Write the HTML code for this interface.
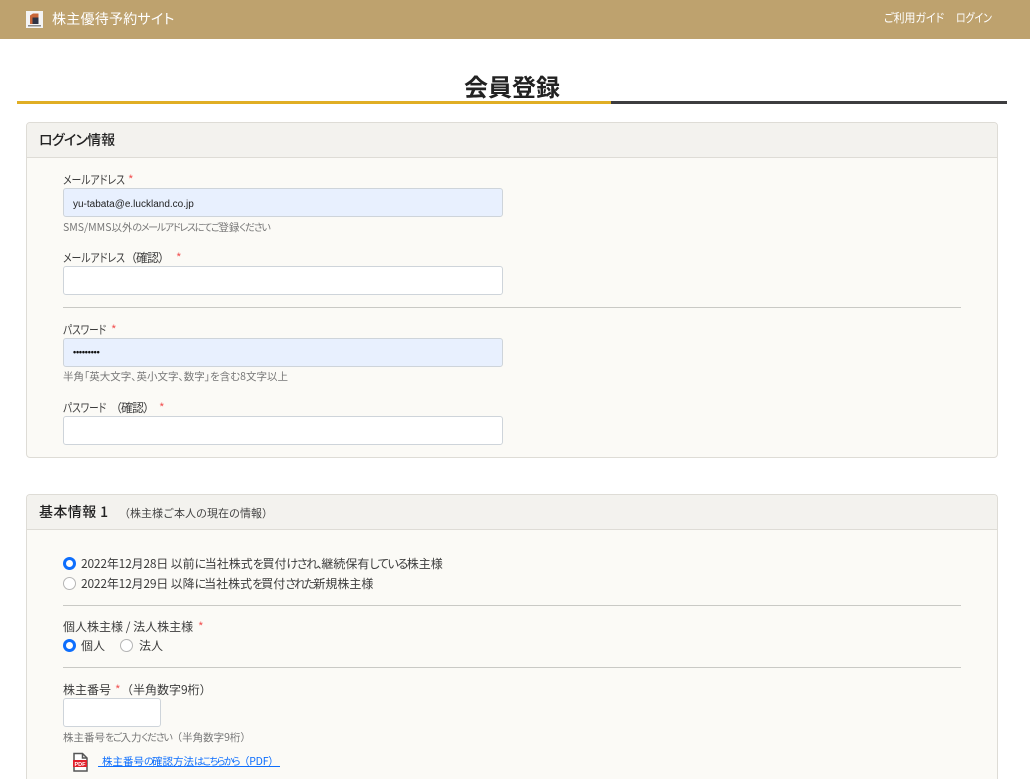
<!DOCTYPE html>
<html lang="ja"><head><meta charset="utf-8"><title>会員登録</title>
<style>
html,body{margin:0;padding:0;background:#fff;width:1030px;height:779px;overflow:hidden}
#w{position:relative;width:1030px;height:779px;overflow:hidden;font-family:"Liberation Sans","Noto Sans CJK JP",sans-serif;color:#212529}
.a{position:absolute;white-space:nowrap}
.t{position:absolute;white-space:nowrap;font-size:12px;line-height:16px;color:#3c3c3c;font-family:"Noto Sans CJK JP",sans-serif}
.x{font-feature-settings:"palt";transform-origin:0 50%}
.k{font-feature-settings:"palt";letter-spacing:-1.4px}
.n{font-feature-settings:"palt";letter-spacing:-2px}
.h{color:#777;font-size:10.5px}
.h .k{font-size:10px;letter-spacing:-1.3px}
.s{color:#f25a5a}
.i{position:absolute;left:63px;width:438px;height:27px;border:1px solid #ced4da;border-radius:3px;background:#fff}
.f{background:#e8f0fe}
.c{position:absolute;left:26px;width:970px;border:1px solid #dedcd6;border-radius:4px;background:#fbfaf6}
.ch{position:absolute;left:0;top:0;right:0;height:34px;background:#f3f2ee;border-bottom:1px solid #dedcd6;border-radius:4px 4px 0 0}
.l{position:absolute;left:63px;width:898px;height:1px;background:#c9c9c5}
.r{position:absolute;width:13px;height:13px;border-radius:50%;box-sizing:border-box}
.on{background:#fff;border:3.5px solid #0d6efd}
.off{background:#fff;border:1px solid #b5b5b5}
</style></head><body><div id="w">
<div class="a" style="left:0;top:0;width:1030px;height:39px;background:#bea26e"></div>
<svg class="a" style="left:26px;top:11px" width="17" height="17" viewBox="0 0 17 17"><rect width="17" height="17" fill="#f4f4f4"/><path d="M4 13V4.500L7 2.500h5.500V13z" fill="#c9673a"/><path d="M6.500 13V6.500h6V13z" fill="#2f3345"/><rect x="2" y="14" width="13" height="1.500" fill="#8a8a8a"/></svg>
<div class="t" style="left:52px;top:9px;font-size:14px;line-height:20px;color:#fff;letter-spacing:.25px;font-feature-settings:'palt'">株主優待予約サイト</div>
<div class="t x" style="left:884px;top:10px;color:#fff;transform:scaleX(.91)">ご利用ガイド</div>
<div class="t x" style="left:956px;top:10px;color:#fff;transform:scaleX(.82)">ログイン</div>

<div class="t" style="left:464px;top:69px;font-size:24px;line-height:34px;font-weight:700;color:#222">会員登録</div>
<div class="a" style="left:17px;top:101px;width:594px;height:3px;background:#e0ae24"></div>
<div class="a" style="left:611px;top:101px;width:396px;height:3px;background:#3d3d3f"></div>

<div class="c" style="top:122px;height:334px"><div class="ch"></div></div>
<div class="t" style="left:39px;top:130px;font-size:14px;line-height:20px;font-weight:500;color:#222"><span style="font-feature-settings:'palt';letter-spacing:-.75px">ログイン</span>情報</div>

<div class="t x" style="left:63px;top:172px;transform:scaleX(.82)">メールアドレス</div>
<div class="t s" style="left:128px;top:172px">*</div>
<div class="i f" style="top:188px"></div>
<div class="a" style="left:73px;top:198px;font-size:10px;line-height:14px;color:#222">yu-tabata@e.luckland.co.jp</div>
<div class="t h" style="left:63px;top:219px">SMS/MMS以外<span class="k">のメールアドレスにてご</span>登録<span class="k">ください</span></div>

<div class="t x" style="left:63px;top:250px;transform:scaleX(.82)">メールアドレス</div>
<div class="t" style="left:125px;top:250px;letter-spacing:-1px">（確認）</div>
<div class="t s" style="left:176px;top:250px">*</div>
<div class="i" style="top:266px"></div>
<div class="l" style="top:307px"></div>

<div class="t x" style="left:63px;top:322px;transform:scaleX(.8)">パスワード</div>
<div class="t s" style="left:111px;top:322px">*</div>
<div class="i f" style="top:338px"></div>
<div class="a" style="left:73px;top:345px;font-size:9px;line-height:14px;letter-spacing:-.2px;color:#111;font-weight:700">•••••••••</div>
<div class="t h" style="left:63px;top:369px;font-feature-settings:'palt'">半角「英大文字、英小文字、数字」を含む8文字以上</div>

<div class="t x" style="left:63px;top:400px;transform:scaleX(.8)">パスワード</div>
<div class="t" style="left:110px;top:400px;letter-spacing:-1px">（確認）</div>
<div class="t s" style="left:159px;top:400px">*</div>
<div class="i" style="top:416px"></div>

<div class="c" style="top:494px;height:285px;border-bottom:0;border-radius:4px 4px 0 0"><div class="ch"></div></div>
<div class="t" style="left:39px;top:502px;font-size:14px;line-height:20px;font-weight:500;color:#222;letter-spacing:.4px">基本情報 <span style="letter-spacing:0">1</span></div>
<div class="t" style="left:119px;top:505px;font-size:11px;color:#444">（株主様ご本人の現在の情報）</div>

<div class="r on" style="left:63px;top:557px"></div>
<div class="t" style="left:81px;top:556px"><span style="letter-spacing:-.2px">2022年12月28日 </span>以前<span class="k">に</span>当社株式<span class="k">を</span>買付<span class="k">けされ、</span>継続保有<span class="k">している</span>株主様</div>
<div class="r off" style="left:63px;top:577px"></div>
<div class="t" style="left:81px;top:576px"><span style="letter-spacing:-.2px">2022年12月29日 </span>以降<span class="n">に</span>当社株式<span class="n">を</span>買付<span class="n">された</span>新規株主様</div>
<div class="l" style="top:605px"></div>

<div class="t" style="left:63px;top:619px">個人株主様 / 法人株主様</div>
<div class="t s" style="left:198px;top:619px">*</div>
<div class="r on" style="left:63px;top:639px"></div>
<div class="t" style="left:81px;top:638px">個人</div>
<div class="r off" style="left:120px;top:639px"></div>
<div class="t" style="left:139px;top:638px">法人</div>
<div class="l" style="top:667px"></div>

<div class="t" style="left:63px;top:682px">株主番号</div>
<div class="t s" style="left:115px;top:682px">*</div>
<div class="t" style="left:121px;top:682px">（半角数字9桁）</div>
<div class="i" style="top:698px;width:96px"></div>
<div class="t h" style="left:63px;top:729px">株主番号<span class="k">をご</span>入力<span class="k">ください</span>（半角数字9桁）</div>
<svg class="a" style="left:72px;top:752px" width="17" height="20" viewBox="0 0 17 20"><path d="M2 1.500h8.500L15 6V19H2z" fill="#fff" stroke="#555" stroke-width="1.500"/><path d="M10.500 1.500V6H15" fill="none" stroke="#555" stroke-width="1.500"/><rect x="1" y="8" width="14" height="7" fill="#e0202c"/><text x="8" y="14" font-size="5.500" font-weight="700" fill="#fff" text-anchor="middle" font-family="Liberation Sans">PDF</text></svg>
<div class="t" style="left:102px;top:754px;font-size:10.5px;color:#0d6efd;line-height:14px">株主番号<span class="k" style="font-size:10px;letter-spacing:-1.6px">の</span>確認方法<span class="k" style="font-size:10px;letter-spacing:-1.6px">はこちらから</span><span style="letter-spacing:-.2px">（PDF）</span></div>
<div class="a" style="left:98px;top:766px;width:182px;height:1px;background:#0d6efd"></div>
</div></body></html>
